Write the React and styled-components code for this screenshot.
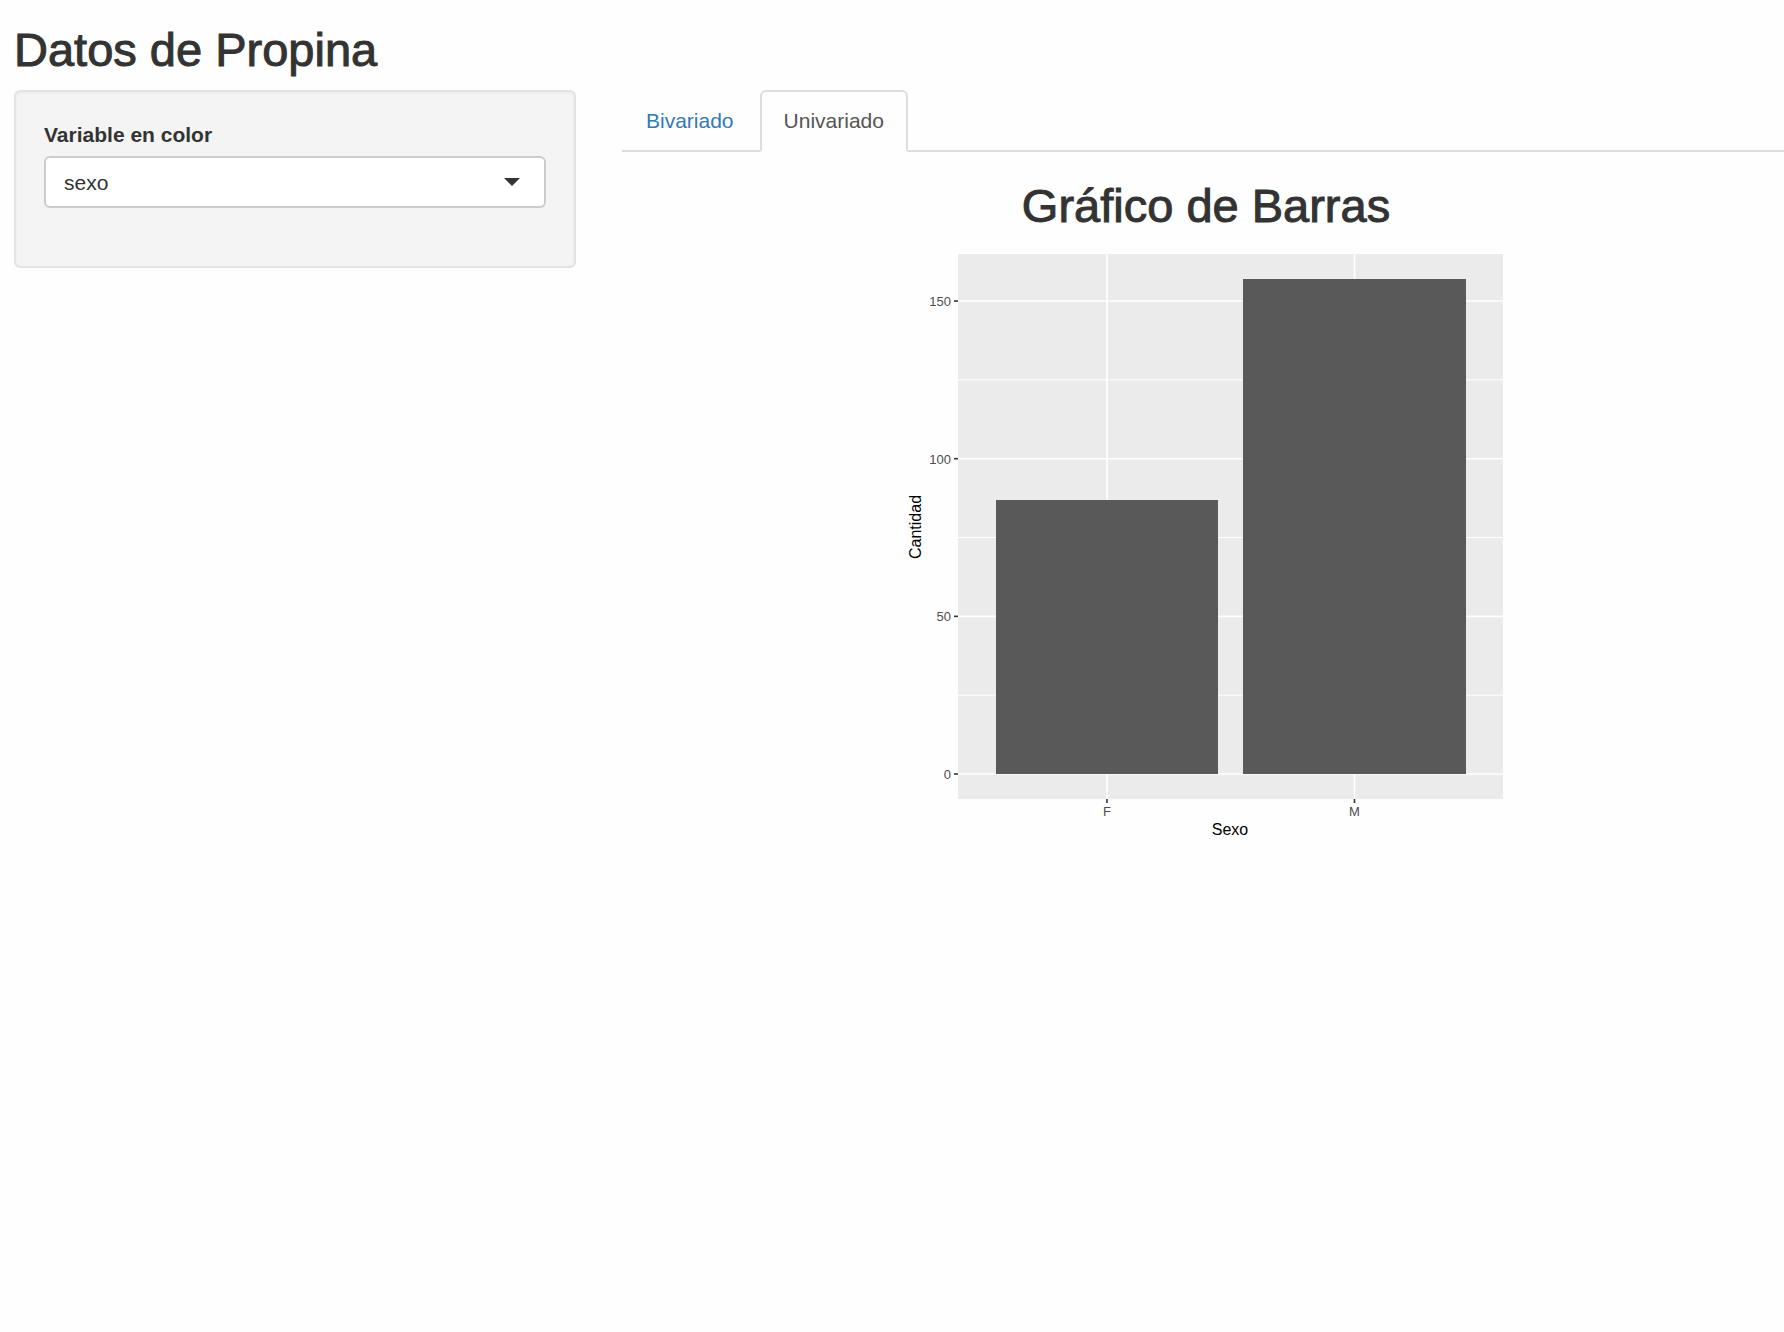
import React, { useState } from "react";
import styled, { createGlobalStyle } from "styled-components";

const GlobalStyle = createGlobalStyle`
  *, *::before, *::after { box-sizing: border-box; }
  body {
    margin: 0;
    background: #fefefe;
    color: #333;
    font-family: "Helvetica Neue", "Liberation Sans", Arial, sans-serif;
    font-size: 21px;
    line-height: 30px;
  }
`;

const Page = styled.div`
  padding: 24px 0 24px 14px;
`;

const Title = styled.h2`
  margin: 0 0 14px;
  font-size: 47px;
  line-height: 52px;
  font-weight: 400;
  -webkit-text-stroke: 1px currentColor;
`;

const Columns = styled.div`
  display: flex;
  align-items: flex-start;
  gap: 46px;
`;

const Sidebar = styled.form`
  flex: 0 0 562px;
  padding: 28px 28px 58px;
  background: #f4f4f4;
  border: 2px solid #e3e3e3;
  border-radius: 6px;
  box-shadow: inset 0 1px 3px rgba(0, 0, 0, 0.05);
`;

const Label = styled.label`
  display: block;
  margin-bottom: 6px;
  font-weight: 700;
`;

const SelectBox = styled.div`
  position: relative;
`;

const Select = styled.select`
  display: block;
  width: 100%;
  height: 52px;
  padding: 2px 50px 0 18px;
  appearance: none;
  background: #fff;
  border: 2px solid #ccc;
  border-radius: 6px;
  color: #333;
  font: inherit;
`;

const Caret = styled.svg`
  position: absolute;
  top: 22px;
  right: 26px;
  width: 16px;
  height: 8px;
  fill: #333;
  pointer-events: none;
`;

const Main = styled.main`
  flex: 1;
  min-width: 0;
`;

const Tabs = styled.ul`
  display: flex;
  gap: 2px;
  height: 62px;
  margin: 0;
  padding: 0;
  list-style: none;
  border-bottom: 2px solid #ddd;
`;

const TabLink = styled.a`
  display: block;
  padding: 14px 22px;
  border: 2px solid ${(p) => (p.$active ? "#ddd" : "transparent")};
  border-bottom-color: ${(p) => (p.$active ? "#fefefe" : "transparent")};
  border-radius: 6px 6px 0 0;
  background: ${(p) => (p.$active ? "#fefefe" : "transparent")};
  color: ${(p) => (p.$active ? "#555" : "#337ab7")};
  text-decoration: none;
`;

const Pane = styled.section`
  display: flex;
  flex-direction: column;
  align-items: center;
  padding: 28px 0 0 6px;
`;

const Chart = styled.svg`
  display: block;
  width: 602px;
  max-width: 100%;
  height: auto;
`;

const TickText = styled.text`
  font-size: 13px;
  fill: #4d4d4d;
`;

const AxisTitle = styled.text`
  font-size: 16px;
  fill: #000;
  text-anchor: middle;
`;

const panel = { left: 53, right: 598, top: 8, bottom: 553 };
const baseY = 528;
const unit = 3.153;
const toY = (value) => baseY - value * unit;
const bars = [
  { name: "F", count: 87, left: 91, right: 313 },
  { name: "M", count: 157, left: 338, right: 561 },
];
const middle = (bar) => (bar.left + bar.right) / 2;

function BarChart() {
  return (
    <Chart viewBox="0 0 602 600" role="img" aria-label="Cantidad / Sexo">
      <rect x={panel.left} y={panel.top} width={panel.right - panel.left} height={panel.bottom - panel.top} fill="#ebebeb" />
      {[25, 75, 125].map((v) => (
        <line key={v} x1={panel.left} x2={panel.right} y1={toY(v)} y2={toY(v)} stroke="#fff" />
      ))}
      {[0, 50, 100, 150].map((v) => (
        <g key={v}>
          <line x1={panel.left} x2={panel.right} y1={toY(v)} y2={toY(v)} stroke="#fff" strokeWidth="1.6" />
          <line x1={panel.left - 4} x2={panel.left} y1={toY(v)} y2={toY(v)} stroke="#333" strokeWidth="1.6" />
          <TickText x={panel.left - 7} y={toY(v) + 5} textAnchor="end">{v}</TickText>
        </g>
      ))}
      {bars.map((bar) => (
        <g key={bar.name}>
          <line x1={middle(bar)} x2={middle(bar)} y1={panel.top} y2={panel.bottom} stroke="#fff" strokeWidth="1.6" />
          <line x1={middle(bar)} x2={middle(bar)} y1={panel.bottom} y2={panel.bottom + 4} stroke="#333" strokeWidth="1.6" />
          <rect x={bar.left} y={Math.round(toY(bar.count))} width={bar.right - bar.left} height={baseY - Math.round(toY(bar.count))} fill="#595959" />
          <TickText x={middle(bar)} y="570" textAnchor="middle">{bar.name}</TickText>
        </g>
      ))}
      <AxisTitle x="325" y="589">Sexo</AxisTitle>
      <AxisTitle transform="translate(16 281) rotate(-90)">Cantidad</AxisTitle>
    </Chart>
  );
}

export default function App() {
  const [tab, setTab] = useState("Univariado");
  return (
    <Page>
      <GlobalStyle />
      <Title>Datos de Propina</Title>
      <Columns>
        <Sidebar>
          <Label htmlFor="variable">Variable en color</Label>
          <SelectBox>
            <Select id="variable" defaultValue="sexo">
              <option value="sexo">sexo</option>
            </Select>
            <Caret viewBox="0 0 16 8" aria-hidden="true">
              <path d="M0 0h16L8 8z" />
            </Caret>
          </SelectBox>
        </Sidebar>
        <Main>
          <Tabs>
            {["Bivariado", "Univariado"].map((name) => (
              <li key={name}>
                <TabLink
                  href={"#" + name.toLowerCase()}
                  $active={tab === name}
                  aria-current={tab === name ? "page" : undefined}
                  onClick={() => setTab(name)}
                >
                  {name}
                </TabLink>
              </li>
            ))}
          </Tabs>
          {tab === "Univariado" && (
            <Pane>
              <Title>Gráfico de Barras</Title>
              <BarChart />
            </Pane>
          )}
        </Main>
      </Columns>
    </Page>
  );
}
